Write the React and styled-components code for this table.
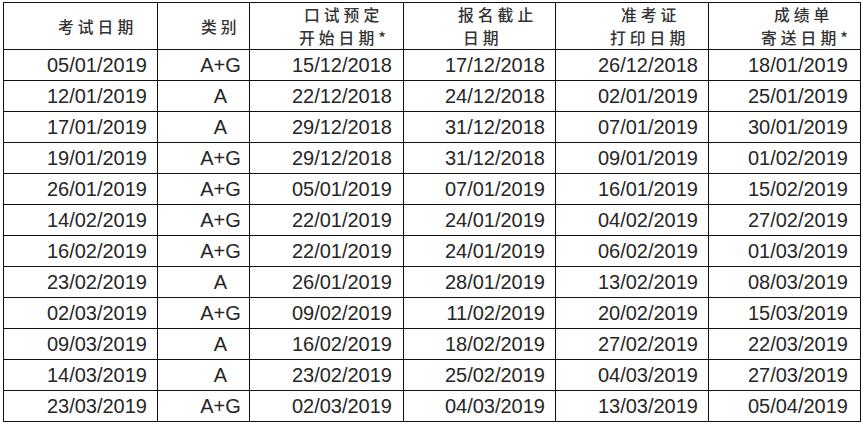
import React from 'react'
import styled, {createGlobalStyle} from "styled-components";

const GlobalStyle = createGlobalStyle`
body {
  margin: 0;
  background: #ffffff;
}
`;

const Page = styled.div`
padding: 2px 0 0 3px;
background: #ffffff;
`;

const Table = styled.table`
border-collapse: collapse;
table-layout: fixed;
width: 857px;
color: #262626;
`;

const HeadRow = styled.tr`
height: 46px;
`;

const HeadCell = styled.th`
border: 1px solid #111;
padding: 0;
text-align: left;
vertical-align: middle;
font-family: "Noto Sans CJK SC", "Liberation Serif", serif;
font-weight: 500;
font-size: 15.8px;
line-height: 23px;
color: #333;
`;

const HeadLine = styled.div`
padding-left: ${props => props.$indent}px;
white-space: nowrap;
letter-spacing: 4px;
`;

const Row = styled.tr`
height: 31px;
`;

const Cell = styled.td`
border: 1px solid #111;
padding: 0 ${props => props.$pr || 0}px 0 ${props => props.$pl || 0}px;
text-align: ${props => props.$align || "right"};
vertical-align: middle;
font-family: "Liberation Sans", Arial, sans-serif;
font-size: 20px;
line-height: 22px;
white-space: nowrap;
`;

const widths = [154, 92, 154, 152, 153, 152];

const headers = [
  [["考试日期", 54]],
  [["类别", 43]],
  [["口试预定", 54], ["开始日期*", 49]],
  [["报名截止", 54], ["日期", 59]],
  [["准考证", 65], ["打印日期", 54]],
  [["成绩单", 65], ["寄送日期*", 52]],
];

const rows = [
  ["05/01/2019", "A+G", "15/12/2018", "17/12/2018", "26/12/2018", "18/01/2019"],
  ["12/01/2019", "A", "22/12/2018", "24/12/2018", "02/01/2019", "25/01/2019"],
  ["17/01/2019", "A", "29/12/2018", "31/12/2018", "07/01/2019", "30/01/2019"],
  ["19/01/2019", "A+G", "29/12/2018", "31/12/2018", "09/01/2019", "01/02/2019"],
  ["26/01/2019", "A+G", "05/01/2019", "07/01/2019", "16/01/2019", "15/02/2019"],
  ["14/02/2019", "A+G", "22/01/2019", "24/01/2019", "04/02/2019", "27/02/2019"],
  ["16/02/2019", "A+G", "22/01/2019", "24/01/2019", "06/02/2019", "01/03/2019"],
  ["23/02/2019", "A", "26/01/2019", "28/01/2019", "13/02/2019", "08/03/2019"],
  ["02/03/2019", "A+G", "09/02/2019", "11/02/2019", "20/02/2019", "15/03/2019"],
  ["09/03/2019", "A", "16/02/2019", "18/02/2019", "27/02/2019", "22/03/2019"],
  ["14/03/2019", "A", "23/02/2019", "25/02/2019", "04/03/2019", "27/03/2019"],
  ["23/03/2019", "A+G", "02/03/2019", "04/03/2019", "13/03/2019", "05/04/2019"],
];

// per column padding for the data cells
const cellPad = [
  {pr: 10},
  {align: "center", pl: 34},
  {pr: 11},
  {pr: 10},
  {pr: 10},
  {pr: 12},
];

export default function App() {
  return (
    <Page>
      <GlobalStyle/>
      <Table>
        <colgroup>
          {widths.map((w, i) => <col key={i} style={{width: w}}/>)}
        </colgroup>
        <thead>
        <HeadRow>
          {headers.map((lines, i) => (
            <HeadCell key={i}>
              {lines.map(([t, indent]) => <HeadLine key={t} $indent={indent}>{t}</HeadLine>)}
            </HeadCell>
          ))}
        </HeadRow>
        </thead>
        <tbody>
        {rows.map((r, ri) => (
          <Row key={ri}>
            {r.map((v, ci) => (
              <Cell key={ci} $align={cellPad[ci].align} $pl={cellPad[ci].pl} $pr={cellPad[ci].pr}>{v}</Cell>
            ))}
          </Row>
        ))}
        </tbody>
      </Table>
    </Page>
  );
}
